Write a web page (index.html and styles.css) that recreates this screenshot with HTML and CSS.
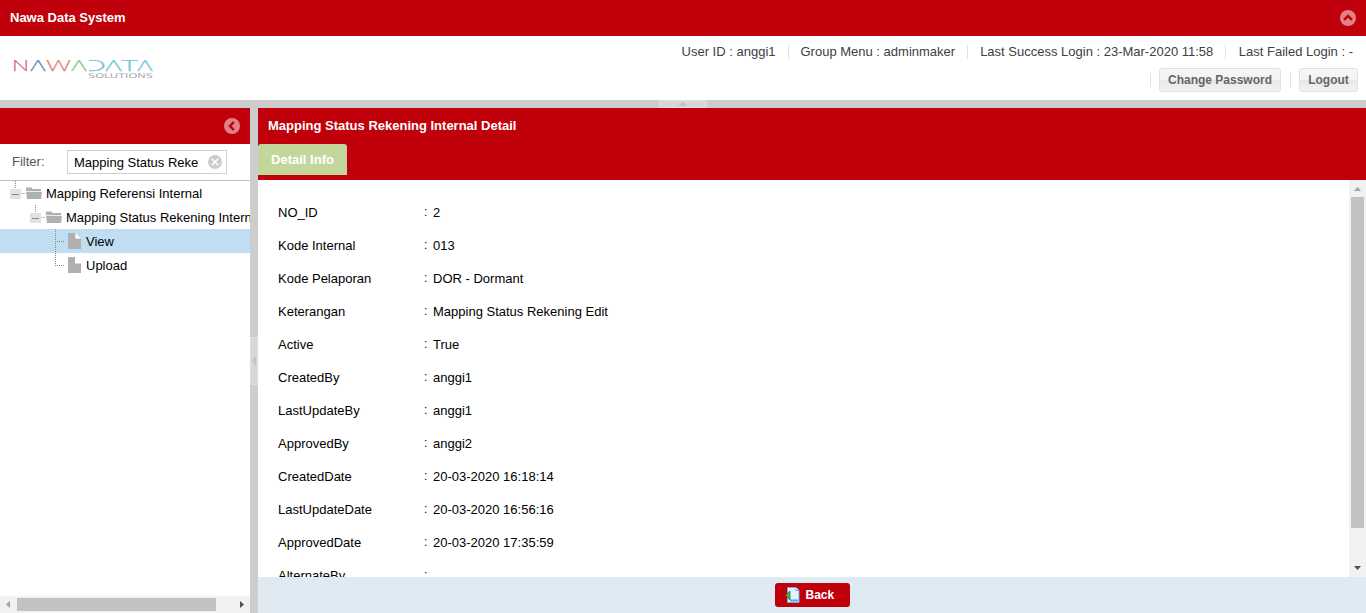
FILE: index.html
```html
<!DOCTYPE html>
<html lang="id">
<head>
<meta charset="utf-8">
<title>Nawa Data System</title>
<link rel="stylesheet" href="styles.css">
</head>
<body>
<header class="titlebar">
  <span>Nawa Data System</span>
  <svg class="tool" viewBox="0 0 16 16"><circle cx="8" cy="8" r="8"/><path d="M4 9.800 8 6l4 3.800"/></svg>
</header>
<section class="topbar">
  <svg class="logo" viewBox="0 0 142 28" role="img" aria-label="Nawa Data Solutions">
    <defs>
      <clipPath id="d-clip"><rect x="76" y="0" width="20" height="20"/></clipPath>
    </defs>
    <g class="logo-word">
      <text x="-1" y="18" textLength="17" lengthAdjust="spacingAndGlyphs" class="c-pink">N</text>
      <text x="17" y="18" textLength="16" lengthAdjust="spacingAndGlyphs" class="c-blue">Λ</text>
      <text x="33" y="18" textLength="25" lengthAdjust="spacingAndGlyphs" class="c-coral">W</text>
      <text x="58" y="18" textLength="16" lengthAdjust="spacingAndGlyphs" class="c-green">Λ</text>
      <g clip-path="url(#d-clip)"><text x="69" y="18" textLength="24" lengthAdjust="spacingAndGlyphs" class="c-cyan">D</text></g>
      <text x="92" y="18" textLength="17" lengthAdjust="spacingAndGlyphs" class="c-cyan">Λ</text>
      <text x="108" y="18" textLength="17" lengthAdjust="spacingAndGlyphs" class="c-cyan">T</text>
      <text x="124" y="18" textLength="16" lengthAdjust="spacingAndGlyphs" class="c-cyan">Λ</text>
    </g>
    <text class="logo-sub" x="75" y="25" textLength="65" lengthAdjust="spacingAndGlyphs">SOLUTIONS</text>
  </svg>
  <div class="session">
    <div class="session-row">
      <span>User ID : anggi1</span><i class="sep"></i><span>Group Menu : adminmaker</span><i class="sep"></i><span>Last Success Login : 23-Mar-2020 11:58</span><i class="sep last"></i><span>Last Failed Login : -</span>
    </div>
    <div class="session-row actions">
      <i class="sep"></i><button class="btn change">Change Password</button><i class="sep"></i><button class="btn logout">Logout</button>
    </div>
  </div>
</section>
<div class="split-h"><div class="grip-h"><svg viewBox="0 0 10 4"><path d="M0 4 5 0l5 4z"/></svg></div></div>
<div class="workspace">
  <aside class="sidebar">
    <div class="side-head"><svg class="tool" viewBox="0 0 16 16"><circle cx="8" cy="8" r="8"/><path d="M9.800 4 6 8l3.800 4"/></svg></div>
    <div class="filter">
      <label>Filter:</label>
      <div class="field"><span>Mapping Status Reke</span><svg viewBox="0 0 14 14"><circle cx="7" cy="7" r="7"/><path d="M3.800 3.800l6.400 6.400M10.200 3.800l-6.400 6.400"/></svg></div>
    </div>
    <div class="tree">
      <div class="node">
        <svg class="branch b1" viewBox="0 0 44 24"><path class="dots" d="M15.500 0v7M21.500 12.500h3"/><path class="box" d="M10 8h11v10H10z"/><path class="minus" d="M12 13.500h7"/><path class="icon" d="M26 6.500h6v1.500h9v2H26zM26 10.700h16L41 18H27z"/></svg>
        <span>Mapping Referensi Internal</span>
      </div>
      <div class="node">
        <svg class="branch b2" viewBox="0 0 64 24"><path class="dots" d="M35.500 0v7M41.500 12.500h3"/><path class="box" d="M30 8h11v10H30z"/><path class="minus" d="M32 13.500h7"/><path class="icon" d="M46 6.500h6v1.500h9v2H46zM46 10.700h16L61 18H47z"/></svg>
        <span>Mapping Status Rekening Internal</span>
      </div>
      <div class="node selected">
        <svg class="branch b3" viewBox="0 0 84 24"><path class="dots" d="M55.500 0v24M57 12.500h7"/><path class="icon" d="M68 4h7.500v5.500H81V20H68z"/><path class="fold" d="M75.500 4 81 9.500h-5.500z"/></svg>
        <span>View</span>
      </div>
      <div class="node">
        <svg class="branch b3" viewBox="0 0 84 24"><path class="dots" d="M55.500 0v12M55 12.500h9"/><path class="icon" d="M68 4h7l6 6v10H68z"/><path class="fold" d="M75 4h.7L81 9.300v1.200h-6z"/></svg>
        <span>Upload</span>
      </div>
    </div>
    <div class="scroll-x"><svg class="arrow off" viewBox="0 0 17 17"><path d="M10 5v7L6 8.500z"/></svg><div class="thumb-x"></div><svg class="arrow" viewBox="0 0 17 17"><path d="M7 5v7l4-3.500z"/></svg></div>
  </aside>
  <div class="split-v"><div class="grip-v"><svg viewBox="0 0 4 10"><path d="M4 0 0 5l4 5z"/></svg></div></div>
  <main class="main">
    <div class="main-head">Mapping Status Rekening Internal Detail</div>
    <div class="tabs"><div class="tab">Detail Info</div></div>
    <div class="content">
      <div class="details">
        <div class="row"><span class="label">NO_ID</span><span class="colon">:</span><span>2</span></div>
        <div class="row"><span class="label">Kode Internal</span><span class="colon">:</span><span>013</span></div>
        <div class="row"><span class="label">Kode Pelaporan</span><span class="colon">:</span><span>DOR - Dormant</span></div>
        <div class="row"><span class="label">Keterangan</span><span class="colon">:</span><span>Mapping Status Rekening Edit</span></div>
        <div class="row"><span class="label">Active</span><span class="colon">:</span><span>True</span></div>
        <div class="row"><span class="label">CreatedBy</span><span class="colon">:</span><span>anggi1</span></div>
        <div class="row"><span class="label">LastUpdateBy</span><span class="colon">:</span><span>anggi1</span></div>
        <div class="row"><span class="label">ApprovedBy</span><span class="colon">:</span><span>anggi2</span></div>
        <div class="row"><span class="label">CreatedDate</span><span class="colon">:</span><span>20-03-2020 16:18:14</span></div>
        <div class="row"><span class="label">LastUpdateDate</span><span class="colon">:</span><span>20-03-2020 16:56:16</span></div>
        <div class="row"><span class="label">ApprovedDate</span><span class="colon">:</span><span>20-03-2020 17:35:59</span></div>
        <div class="row"><span class="label">AlternateBy</span><span class="colon">:</span><span></span></div>
      </div>
      <div class="scroll-y"><svg class="arrow off" viewBox="0 0 17 17"><path d="M5 11h7L8.500 7z"/></svg><div class="thumb-y"></div><svg class="arrow" viewBox="0 0 17 17"><path d="M5 6h7l-3.500 4z"/></svg></div>
    </div>
    <footer class="footer">
      <button class="back"><svg viewBox="0 0 16 16"><path d="M2.500.5h8.500l3 3v12H2.500z" fill="#e4f1ff" stroke="#6eaae4"/><path d="M11 .5v3h3" fill="#fff" stroke="#6eaae4"/><path d="M5 12.500h8v2H5z" fill="#58a8ec"/><path d="M.5 8.500 5 4v9z" fill="#55a846" stroke="#2f7e30" stroke-width=".8"/></svg>Back</button>
    </footer>
  </main>
</div>
</body>
</html>
```
FILE: styles.css
```css
* { box-sizing: border-box; }
body {
  margin: 0;
  height: 613px;
  overflow: hidden;
  display: flex;
  flex-direction: column;
  font: 13px/16px "Liberation Sans", Arial, sans-serif;
  color: #000;
  background: #fff;
}
svg { display: block; flex: none; }
button { font: inherit; margin: 0; }

.titlebar {
  height: 36px;
  flex: none;
  display: flex;
  align-items: center;
  justify-content: space-between;
  padding: 0 10px;
  background: #c0000a;
  color: #fff;
  font-weight: bold;
}
.tool { width: 16px; height: 16px; }
.tool circle { fill: #e18085; }
.tool path { fill: none; stroke: #c0000a; stroke-width: 2.5; }

.topbar {
  height: 64px;
  flex: none;
  display: flex;
  justify-content: space-between;
  align-items: flex-start;
  padding: 8px 8px 0 13px;
}
.logo { width: 142px; height: 28px; margin-top: 9px; overflow: visible; }
.logo-word { font: 300 16.5px Lato, sans-serif; stroke-width: .25; }
.logo-sub { font: 6.5px "DejaVu Sans", sans-serif; fill: #aaa; }
.c-pink { fill: #d9668c; stroke: #d9668c; }
.c-blue { fill: #5c93bd; stroke: #5c93bd; }
.c-coral { fill: #e58678; stroke: #e58678; }
.c-green { fill: #88c987; stroke: #88c987; }
.c-cyan { fill: #72c7d9; stroke: #72c7d9; }
.session { display: flex; flex-direction: column; color: #404040; }
.session-row { display: flex; align-items: center; justify-content: flex-end; height: 16px; padding-right: 5px; white-space: nowrap; }
.sep { width: 1px; height: 14px; margin: 0 12px; background: #e0e0e0; }
.sep.last { margin-right: 12.500px; }
.actions { height: 24px; margin-top: 8px; padding-right: 0; }
.actions .sep { margin: 0 8px; }
.change + .sep { margin-left: 9px; }
.btn {
  height: 24px;
  padding: 0 0 1px;
  border: 1px solid #e0e0e0;
  border-radius: 3px;
  background: linear-gradient(#f6f6f6, #f3f3f3 48%, #e8e8e8 50%, #f2f2f2);
  color: #666;
  font-size: 12px;
  font-weight: bold;
}
.change { width: 122px; }
.logout { width: 59px; }

.split-h { height: 8px; flex: none; display: flex; justify-content: center; background: #cdcdcd; }
.grip-h { width: 48px; height: 8px; display: flex; align-items: center; justify-content: center; border: 1px solid #dedede; background: #d7d7d7; }
.grip-h svg { width: 10px; height: 4px; fill: #c2c2c2; }

.workspace { flex: 1; min-height: 0; display: flex; }
.sidebar { width: 250px; flex: none; display: flex; flex-direction: column; overflow: hidden; }
.side-head { height: 36px; flex: none; display: flex; align-items: center; justify-content: flex-end; padding-right: 10px; background: #c0000a; }
.filter { height: 37px; flex: none; display: flex; align-items: flex-start; padding: 6px 0 0 12px; border-bottom: 1px solid #c0c0c0; }
.filter label { width: 55px; padding-top: 4px; color: #555; }
.field { width: 160px; height: 24px; display: flex; align-items: center; justify-content: space-between; padding: 0 4px 0 6px; border: 1px solid #d0d0d0; white-space: nowrap; }
.field span { padding-top: 2px; }
.field svg { width: 14px; height: 14px; }
.field circle { fill: #ccc; }
.field path { stroke: #fff; stroke-width: 1.4; }

.tree { flex: 1; min-height: 0; overflow: hidden; }
.node { height: 24px; display: flex; align-items: center; white-space: nowrap; }
.node span { padding-top: 2px; }
.node.selected { background: #c1ddf1; }
.branch { height: 24px; margin-right: 2px; }
.b1 { width: 44px; }
.b2 { width: 64px; }
.b3 { width: 84px; }
.dots { fill: none; stroke: #888; stroke-dasharray: 1 1; }
.box { fill: #dfe2e6; }
.minus { stroke: #888; }
.icon { fill: #b0b0b0; }
.fold { fill: #fff; }

.scroll-x { height: 17px; flex: none; display: flex; align-items: center; background: #f1f1f1; }
.thumb-x { width: 199px; height: 13px; margin-right: 17px; background: #c1c1c1; }
.arrow { width: 17px; height: 17px; fill: #505050; }
.arrow.off { fill: #a3a3a3; }

.split-v { width: 8px; flex: none; display: flex; align-items: center; background: #cdcdcd; }
.grip-v { width: 8px; height: 48px; display: flex; align-items: center; justify-content: center; border: 1px solid #dedede; background: #d7d7d7; }
.grip-v svg { width: 4px; height: 10px; fill: #c2c2c2; }

.main { flex: 1; min-width: 0; display: flex; flex-direction: column; }
.main-head { height: 36px; flex: none; padding: 10px; background: #c0000a; color: #fff; font-weight: bold; }
.tabs { height: 36px; flex: none; background: #c0000a; }
.tab { width: 89px; height: 31px; padding-top: 8px; border-radius: 3px 3px 0 0; background: #c3d69b; color: #fff; font-weight: bold; text-align: center; }
.content { flex: 1; min-height: 0; display: flex; overflow: hidden; }
.details { flex: 1; padding: 25px 20px 0; }
.row { height: 33px; flex: none; display: flex; }
.label { width: 145px; }
.colon { width: 10px; padding-left: 1px; font-size: 12px; line-height: 15px; }
.scroll-y { width: 17px; display: flex; flex-direction: column; align-items: center; justify-content: space-between; background: #f1f1f1; }
.thumb-y { width: 13px; height: 331px; margin-bottom: 32px; background: #c1c1c1; }
.footer { height: 36px; flex: none; display: flex; align-items: center; justify-content: center; background: #e0eaf3; }
.back { width: 75px; height: 24px; display: flex; align-items: center; gap: 5px; padding: 0 0 0 10px; border: 0; border-radius: 3px; background: #c0000a; color: #fff; font-size: 12px; font-weight: bold; }
.back svg { width: 16px; height: 16px; }
```
